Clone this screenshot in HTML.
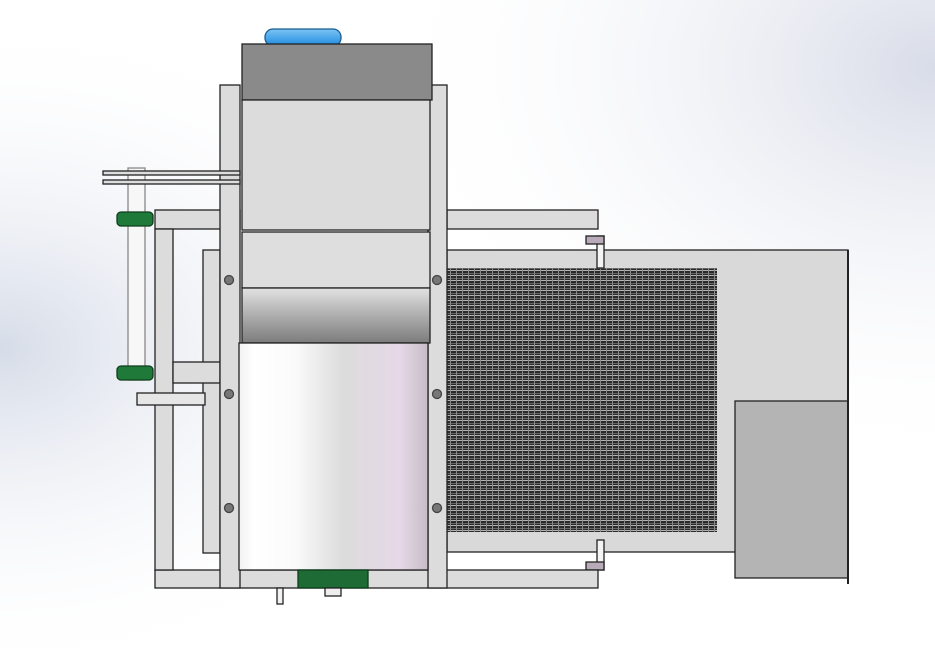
<!DOCTYPE html>
<html><head><meta charset="utf-8"><style>html,body{margin:0;padding:0;width:935px;height:670px;overflow:hidden}</style></head><body>
<svg width="935" height="670" viewBox="0 0 935 670" xmlns="http://www.w3.org/2000/svg">
<defs>
<radialGradient id="bgL" cx="0" cy="0.52" r="0.5" gradientUnits="objectBoundingBox"><stop offset="0" stop-color="#d6dce8"/><stop offset="1" stop-color="#ffffff" stop-opacity="0"/></radialGradient>
<radialGradient id="bgR" cx="1" cy="0.1" r="0.6"><stop offset="0" stop-color="#d8dce8"/><stop offset="1" stop-color="#ffffff" stop-opacity="0"/></radialGradient>
<linearGradient id="cyl" x1="0" x2="1"><stop offset="0" stop-color="#f2f2f2"/><stop offset="0.08" stop-color="#ffffff"/><stop offset="0.3" stop-color="#fafafa"/><stop offset="0.55" stop-color="#dcdcdc"/><stop offset="0.85" stop-color="#e6d8e6"/><stop offset="1" stop-color="#c8bcc8"/></linearGradient>
<linearGradient id="band" x1="0" y1="0" x2="0" y2="1"><stop offset="0" stop-color="#e2e2e2"/><stop offset="0.35" stop-color="#bdbdbd"/><stop offset="1" stop-color="#7c7c7c"/></linearGradient>
<linearGradient id="cap" x1="0" y1="0" x2="0" y2="1"><stop offset="0" stop-color="#7cc4f4"/><stop offset="1" stop-color="#1e8ae0"/></linearGradient>
<pattern id="mesh" width="6" height="5" patternUnits="userSpaceOnUse"><rect width="6" height="5" fill="#2a2a2a"/><rect y="0" width="6" height="1" fill="#b4b4b4"/><rect y="3" width="6" height="1" fill="#666"/><rect x="0" width="1" height="5" fill="#8a8a8a"/></pattern>
</defs>
<rect width="935" height="670" fill="#fff"/>
<rect width="935" height="670" fill="url(#bgL)"/>
<rect width="935" height="670" fill="url(#bgR)"/>
<g stroke="#222" stroke-width="1.3">
<rect x="447" y="250" width="401" height="302" fill="#d9d9d9"/>
<rect x="447" y="268" width="270" height="264" fill="url(#mesh)" stroke="none"/>
<rect x="735" y="401" width="113" height="177" fill="#b4b4b4"/>
<line x1="848" y1="250" x2="848" y2="584" stroke-width="2"/>
<rect x="597" y="236" width="7" height="32" fill="#f4f4f4"/>
<rect x="586" y="236" width="18" height="8" fill="#b8aab8"/>
<rect x="597" y="540" width="7" height="30" fill="#f4f4f4"/>
<rect x="586" y="562" width="18" height="8" fill="#b8aab8"/>
<rect x="155" y="210" width="85" height="19" fill="#dcdcdc"/>
<rect x="447" y="210" width="151" height="19" fill="#dcdcdc"/>
<rect x="155" y="570" width="443" height="18" fill="#dcdcdc"/>
<rect x="155" y="229" width="18" height="341" fill="#dcdcdc"/>
<rect x="203" y="250" width="17" height="303" fill="#dcdcdc"/>
<rect x="137" y="393" width="68" height="12" fill="#e6e6e6"/>
<rect x="173" y="362" width="47" height="21" fill="#dcdcdc"/>
<rect x="220" y="85" width="20" height="503" fill="#dcdcdc"/>
<rect x="428" y="85" width="19" height="503" fill="#dcdcdc"/>
<rect x="265" y="29" width="76" height="17" rx="8" fill="url(#cap)" stroke="#1a5d90"/>
<rect x="242" y="44" width="190" height="56" fill="#8a8a8a"/>
<rect x="242" y="100" width="188" height="130" fill="#dcdcdc"/>
<rect x="242" y="232" width="188" height="56" fill="#dedede"/>
<rect x="242" y="288" width="188" height="55" fill="url(#band)"/>
<rect x="239" y="343" width="189" height="227" fill="url(#cyl)"/>
<rect x="128" y="168" width="17" height="212" fill="#f7f7f7" stroke="#888"/>
<rect x="103" y="171" width="137" height="4" fill="#ddd"/>
<rect x="103" y="180" width="137" height="4" fill="#ddd"/>
<rect x="117" y="212" width="36" height="14" rx="4" fill="#1f7a3a" stroke="#0d3d1c"/>
<rect x="117" y="366" width="36" height="14" rx="4" fill="#1f7a3a" stroke="#0d3d1c"/>
<g fill="#777" stroke="#444">
<circle cx="229" cy="280" r="4.5"/><circle cx="229" cy="394" r="4.5"/><circle cx="229" cy="508" r="4.5"/>
<circle cx="437" cy="280" r="4.5"/><circle cx="437" cy="394" r="4.5"/><circle cx="437" cy="508" r="4.5"/>
</g>
<rect x="298" y="570" width="70" height="18" fill="#1f6b35" stroke="#0d3d1c"/>
<rect x="325" y="588" width="16" height="8" fill="#eee"/>
<rect x="277" y="588" width="6" height="16" fill="#f2f2f2"/>
</g>
</svg>
</body></html>
